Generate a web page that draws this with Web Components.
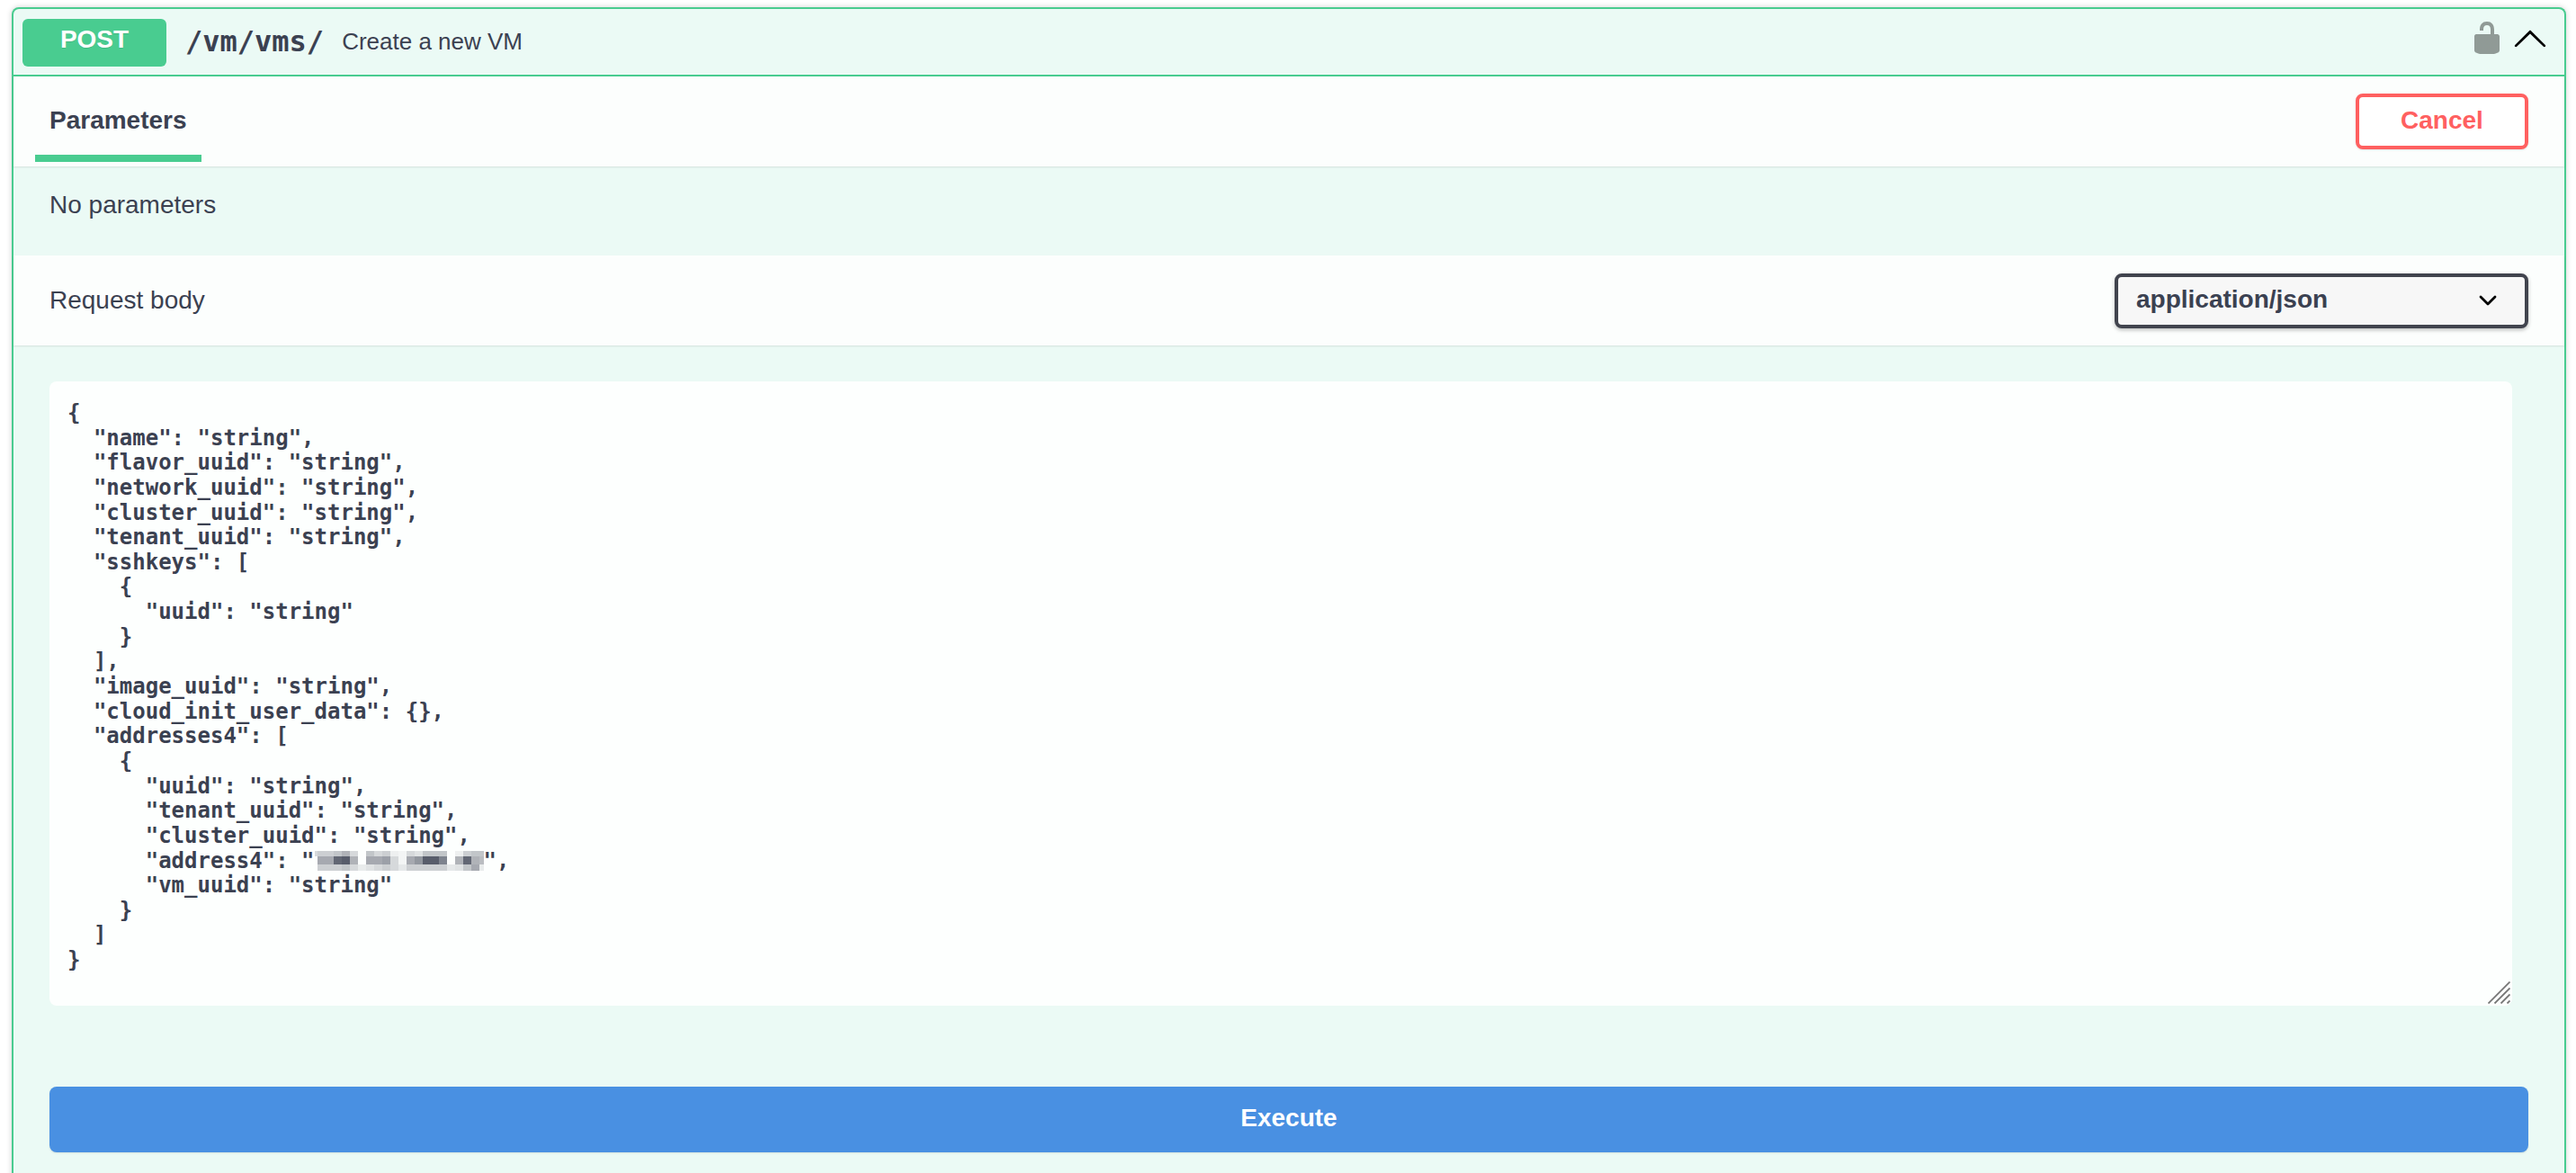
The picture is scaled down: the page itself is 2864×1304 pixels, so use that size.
<!DOCTYPE html>
<html>
<head>
<meta charset="utf-8">
<title>POST /vm/vms/</title>
<style>
html, body { margin: 0; height: 100%; overflow: hidden; background: #fff; }
body { font-family: "Liberation Sans", Arial, sans-serif; color: #3b4151; }
</style>
</head>
<body>
<op-block>
  <op-summary slot="summary" method="POST" path="/vm/vms/">Create a new VM</op-summary>
  <section-bar>
    <op-tab slot="title">Parameters</op-tab>
    <outline-btn slot="action">Cancel</outline-btn>
  </section-bar>
  <op-note>No parameters</op-note>
  <section-bar>
    <plain-title slot="title">Request body</plain-title>
    <type-select slot="action">application/json</type-select>
  </section-bar>
  <op-body>
    <json-editor><div>{
  "name": "string",
  "flavor_uuid": "string",
  "network_uuid": "string",
  "cluster_uuid": "string",
  "tenant_uuid": "string",
  "sshkeys": [
    {
      "uuid": "string"
    }
  ],
  "image_uuid": "string",
  "cloud_init_user_data": {},
  "addresses4": [
    {
      "uuid": "string",
      "tenant_uuid": "string",
      "cluster_uuid": "string",</div><div>      "address4": "<blur-mask></blur-mask>",</div><div>      "vm_uuid": "string"
    }
  ]
}</div></json-editor>
    <execute-btn>Execute</execute-btn>
  </op-body>
</op-block>

<script>
function shadow(el, html) {
  el.attachShadow({ mode: 'open' }).innerHTML = html;
}

class OpBlock extends HTMLElement {
  constructor() {
    super();
    shadow(this, `<style>
      :host { display: block; margin: 8px 11px 0 13px; border: 2px solid #49cc90; border-bottom: 0;
        border-radius: 8px 8px 0 0; background: #ebfaf5; box-shadow: 0 0 6px rgba(0,0,0,.19); }
    </style><slot name="summary"></slot><slot></slot>`);
  }
}

class OpSummary extends HTMLElement {
  constructor() {
    super();
    shadow(this, `<style>
      :host { display: flex; align-items: center; height: 73px; border-bottom: 2px solid #49cc90; padding: 0 18px 0 10px; }
      .method { width: 160px; height: 53px; margin-top: 1px; background: #49cc90; border-radius: 6px; color: #fff; font: bold 28px "Liberation Sans", sans-serif;
        display: flex; align-items: center; justify-content: center; text-shadow: 0 1px 0 rgba(0,0,0,.1); padding-bottom: 6px; box-sizing: border-box; }
      .path { margin-left: 21px; font: bold 32px "DejaVu Sans Mono", monospace; color: #3b4151; position: relative; top: -1px; }
      .desc { margin-left: 20px; flex: 1; font: 26px "Liberation Sans", sans-serif; color: #3b4151; }
      svg { display: block; width: 40px; height: 40px; margin-bottom: 9px; }
      .arrow { margin-left: 8px; }
    </style>
    <span class="method"></span><span class="path"></span><span class="desc"><slot></slot></span>
    <svg class="lock" viewBox="0 0 20 20"><path fill="#909a96" d="M15.800 8H14V5.600C14 2.703 12.665 1 10 1 7.334 1 6 2.703 6 5.600V6h2v-.801C8 3.754 8.797 3 10 3c1.203 0 2 .754 2 2.199V8H4c-.553 0-1 .646-1 1.199V17c0 .549.428 1.139.951 1.307l1.197.387C5.672 18.861 6.550 19 7.100 19h5.800c.549 0 1.428-.139 1.951-.307l1.196-.387c.524-.167.953-.757.953-1.306V9.199C17 8.646 16.352 8 15.800 8z"/></svg>
    <svg class="arrow" viewBox="0 0 20 20"><path fill="#000" d="M17.418 14.908c.272.268.709.268.979 0s.271-.701 0-.969l-7.908-7.830c-.27-.268-.707-.268-.979 0l-7.908 7.830c-.27.268-.27.701 0 .969.271.268.709.268.979 0L10 7.750l7.418 7.158z"/></svg>`);
    this.shadowRoot.querySelector('.method').textContent = this.getAttribute('method');
    this.shadowRoot.querySelector('.path').textContent = this.getAttribute('path');
  }
}

class SectionBar extends HTMLElement {
  constructor() {
    super();
    shadow(this, `<style>
      :host { display: flex; align-items: center; justify-content: space-between; height: 100px; box-sizing: border-box;
        background: #fcfefd; box-shadow: 0 1px 2px rgba(0,0,0,.1); padding: 0 40px 0 40px; position: relative; }
    </style><slot name="title"></slot><slot name="action"></slot>`);
  }
}

class OpTab extends HTMLElement {
  constructor() {
    super();
    shadow(this, `<style>
      :host { display: block; position: relative; height: 100px; font: bold 28px/98px "Liberation Sans", sans-serif; color: #3b4151; }
      :host::after { content: ""; position: absolute; left: -16px; right: -16px; bottom: 5px; height: 8px; background: #49cc90; }
    </style><slot></slot>`);
  }
}

class PlainTitle extends HTMLElement {
  constructor() {
    super();
    shadow(this, `<style>
      :host { display: block; font: 28px "Liberation Sans", sans-serif; color: #3b4151; }
    </style><slot></slot>`);
  }
}

class OutlineBtn extends HTMLElement {
  constructor() {
    super();
    shadow(this, `<style>
      :host { display: flex; align-items: center; justify-content: center; box-sizing: border-box; width: 192px; height: 62px;
        border: 4px solid #ff6060; border-radius: 8px; color: #ff6060; font: bold 28px "Liberation Sans", sans-serif; padding-bottom: 3px;
        box-shadow: 0 1px 2px rgba(0,0,0,.1); background: #fff; }
    </style><slot></slot>`);
  }
}

class TypeSelect extends HTMLElement {
  constructor() {
    super();
    shadow(this, `<style>
      :host { display: flex; align-items: center; justify-content: space-between; box-sizing: border-box; width: 460px; height: 61px;
        border: 4px solid #41444e; border-radius: 8px; background: #f7f7f7; color: #3b4151; font: bold 28px "Liberation Sans", sans-serif;
        padding: 0 31px 0 20px; box-shadow: 0 2px 4px rgba(0,0,0,.25); }
      .label { margin-top: -3px; }
      svg { width: 20px; height: 12px; display: block; }
    </style><span class="label"><slot></slot></span>
    <svg viewBox="0 0 20 12"><path d="M2 2l8 8 8-8" fill="none" stroke="#000" stroke-width="2.800" stroke-linecap="round" stroke-linejoin="round"/></svg>`);
  }
}

class OpNote extends HTMLElement {
  constructor() {
    super();
    shadow(this, `<style>
      :host { display: block; height: 99px; box-sizing: border-box; padding: 27px 0 0 40px; font: 28px/32px "Liberation Sans", sans-serif; color: #3b4151; }
    </style><slot></slot>`);
  }
}

class OpBody extends HTMLElement {
  constructor() {
    super();
    shadow(this, `<style>
      :host { display: flex; flex-direction: column; gap: 90px; padding: 40px 40px 60px 40px; }
    </style><slot></slot>`);
  }
}

class JsonEditor extends HTMLElement {
  constructor() {
    super();
    shadow(this, `<style>
      :host { display: block; position: relative; height: 694px; margin-right: 18px; box-sizing: border-box; background: #fdfffe; border-radius: 8px;
        padding: 22px 20px; white-space: pre; font: bold 24px/27.64px "DejaVu Sans Mono", monospace; color: #3b4151; }
      svg { position: absolute; right: 2px; bottom: 2px; width: 25px; height: 25px; }
    </style><slot></slot>
    <svg viewBox="0 0 25 25"><path d="M0.500 24.500 24.500 0.500M7.500 24.500 24.500 7.500M14.500 24.500 24.500 14.500M21.500 24.500 24.500 21.500" stroke="#777" stroke-width="1.800" fill="none"/></svg>`);
  }
}

// pixelated address: percent of text colour per 9px cell, first row has a 3px lead-in
const MASK = [
  { y: 0, h: 6, cells: [25,25,30,40,20,0,30,20,25,8,5,20,15,30,30,30,0,8,25,30,30] },
  { y: 6, h: 9, cells: [45,45,80,85,40,0,45,45,50,20,5,45,55,85,85,65,0,40,80,40,35] },
  { y: 15, h: 7, cells: [25,25,25,30,20,10,15,20,25,20,12,25,25,25,25,25,12,15,30,45,10] }
];

class BlurMask extends HTMLElement {
  constructor() {
    super();
    let rects = '<rect x="0" y="0" width="3" height="6" fill="#3b4151" opacity=".2"/>';
    MASK.forEach(row => {
      row.cells.forEach((v, i) => {
        rects += `<rect x="${3 + i * 9}" y="${row.y}" width="9" height="${row.h}" fill="#3b4151" opacity="${v / 100}" shape-rendering="crispEdges"/>`;
      });
    });
    shadow(this, `<style>
      :host { display: inline-block; width: 188px; height: 22px; vertical-align: -3px; }
      svg { display: block; width: 188px; height: 22px; }
    </style><svg viewBox="0 0 188 22">${rects}</svg>`);
  }
}

class ExecuteBtn extends HTMLElement {
  constructor() {
    super();
    shadow(this, `<style>
      :host { display: flex; align-items: center; justify-content: center; height: 73px; background: #4990e2; color: #fff; border-radius: 8px;
        font: bold 28px "Liberation Sans", sans-serif; box-shadow: 0 1px 2px rgba(0,0,0,.1); padding-bottom: 3px; box-sizing: border-box; }
    </style><slot></slot>`);
  }
}

customElements.define('op-block', OpBlock);
customElements.define('op-summary', OpSummary);
customElements.define('section-bar', SectionBar);
customElements.define('op-tab', OpTab);
customElements.define('plain-title', PlainTitle);
customElements.define('outline-btn', OutlineBtn);
customElements.define('type-select', TypeSelect);
customElements.define('op-note', OpNote);
customElements.define('op-body', OpBody);
customElements.define('json-editor', JsonEditor);
customElements.define('blur-mask', BlurMask);
customElements.define('execute-btn', ExecuteBtn);
</script>
</body>
</html>
